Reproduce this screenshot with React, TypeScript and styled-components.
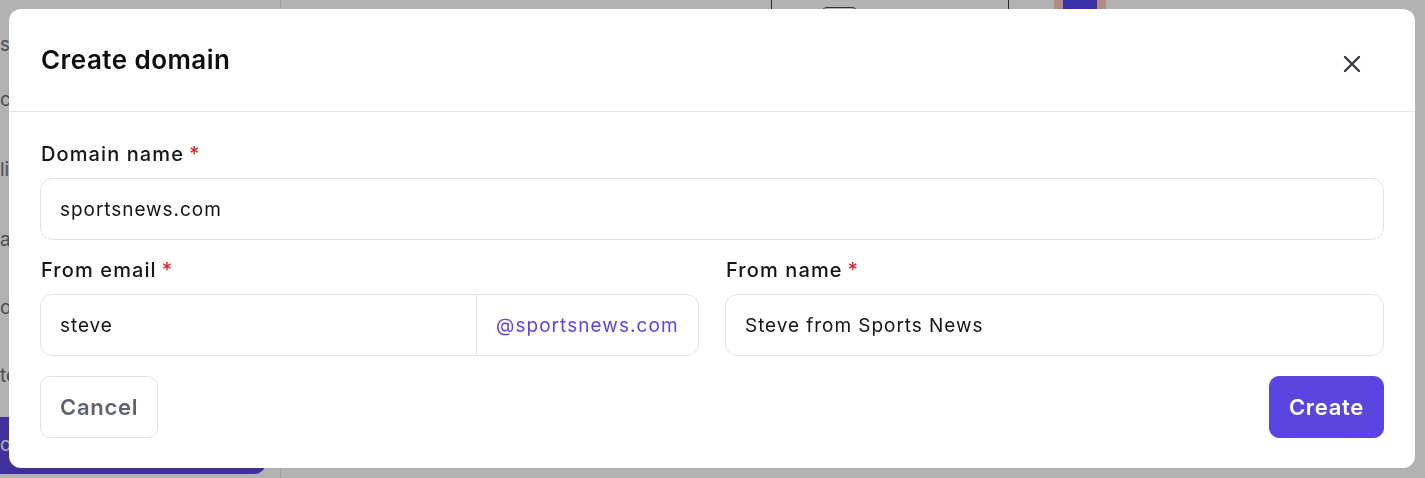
import * as React from "react";
import styled, { createGlobalStyle } from "styled-components";

const GlobalStyle = createGlobalStyle`
  * { box-sizing: border-box; }
  html, body { margin: 0; padding: 0; }
  body {
    font-family: Inter, "Noto Sans", "Liberation Sans", sans-serif;
    background: #ffffff;
    overflow: hidden;
  }
`;

const Page = styled.div`
  display: flex;
  width: 1425px;
  height: 478px;
  overflow: hidden;
`;

const Sidebar = styled.aside`
  width: 281px;
  flex-shrink: 0;
  border-right: 1px solid #e6e6e6;
  background: #ffffff;
`;

const SideInner = styled.div`
  margin-left: -12px;
  padding-top: 33px;
  display: flex;
  flex-direction: column;
`;

const NavItem = styled.div<{ $gap: number }>`
  padding-left: 12px;
  height: 24px;
  margin-bottom: ${(p) => p.$gap}px;
  font-size: 19px;
  color: #6b7280;
  line-height: 24px;
`;

const SideButton = styled.div`
  width: 278px;
  height: 57px;
  border-radius: 0 0 12px 0;
  background: #5b45e0;
  color: #ffffff;
  font-size: 19px;
  line-height: 55px;
  padding-left: 12px;
  margin-top: -1px;
`;

const Main = styled.main`
  flex: 1;
  display: flex;
  flex-direction: column;
`;

const TopStrip = styled.div`
  display: flex;
  height: 40px;
`;

const Cell = styled.div<{ $w: number; $border?: boolean }>`
  width: ${(p) => p.$w}px;
  flex-shrink: 0;
  border-right: ${(p) => (p.$border ? "1px solid #3a3a3a" : "none")};
  display: flex;
  padding-top: 7px;
`;

const Chip = styled.div`
  margin-left: 49px;
  width: 37px;
  height: 24px;
  border: 1.5px solid #444a56;
  border-radius: 6px;
`;

const Avatar = styled.div`
  margin-left: 45px;
  margin-top: -7px;
  width: 52px;
  height: 40px;
  background: #ffc4bf;
  display: flex;
  justify-content: center;
`;

const AvatarShirt = styled.div`
  width: 34px;
  height: 36px;
  background: #5345f0;
`;

const Overlay = styled.div`
  position: fixed;
  inset: 0;
  background: rgba(0, 0, 0, 0.3);
  display: flex;
  align-items: flex-start;
  padding: 9px 10px 0 9px;
`;

const Modal = styled.div`
  width: 100%;
  height: 459px;
  background: #ffffff;
  border-radius: 12px;
  display: flex;
  flex-direction: column;
  overflow: hidden;
`;

const Header = styled.div`
  height: 103px;
  flex-shrink: 0;
  border-bottom: 1px solid #e5e5e5;
  display: flex;
  align-items: center;
  justify-content: space-between;
  padding: 0 43px 0 32px;
`;

const Title = styled.h2`
  margin: 0 0 2px 0;
  font-size: 26px;
  font-weight: 600;
  color: #0d0d0d;
  letter-spacing: 0.45px;
`;

const CloseButton = styled.button`
  width: 40px;
  height: 40px;
  margin-top: 7px;
  border: none;
  background: transparent;
  padding: 0;
  display: flex;
  align-items: center;
  justify-content: center;
  cursor: pointer;
`;

const Body = styled.div`
  padding: 28px 31px 31px 31px;
  display: flex;
  flex-direction: column;
  gap: 16px;
`;

const Field = styled.div`
  display: flex;
  flex-direction: column;
  gap: 10px;
  min-width: 0;
`;

const Label = styled.label`
  font-size: 20px;
  line-height: 28px;
  letter-spacing: 1.1px;
  font-weight: 500;
  color: #161616;
  padding-left: 1px;
`;

const Required = styled.span`
  color: #dc2626;
  margin-left: 5px;
`;

const InputBox = styled.div`
  height: 62px;
  border: 1px solid #e3e3e3;
  border-radius: 12px;
  display: flex;
  align-items: stretch;
  overflow: hidden;
  background: #ffffff;
`;

const Input = styled.input`
  flex: 1;
  min-width: 0;
  border: none;
  outline: none;
  background: transparent;
  padding: 0 19px;
  font-family: inherit;
  font-size: 19px;
  letter-spacing: 0.95px;
  color: #141414;
`;

const Suffix = styled.div`
  width: 222px;
  flex-shrink: 0;
  border-left: 1px solid #e3e3e3;
  display: flex;
  align-items: center;
  padding-left: 19px;
  font-size: 19px;
  letter-spacing: 1.05px;
  color: #5b45e0;
`;

const Row = styled.div`
  display: grid;
  grid-template-columns: 1fr 1fr;
  gap: 26px;
`;

const Actions = styled.div`
  margin-top: 4px;
  display: flex;
  justify-content: space-between;
`;

const Button = styled.button<{ $primary?: boolean }>`
  height: 62px;
  padding: 0 19px;
  border-radius: 10px;
  font-family: inherit;
  font-size: 22px;
  font-weight: 600;
  letter-spacing: 0.7px;
  cursor: pointer;
  border: 1px solid ${(p) => (p.$primary ? "#5b45e0" : "#e3e3e3")};
  background: ${(p) => (p.$primary ? "#5b45e0" : "#ffffff")};
  color: ${(p) => (p.$primary ? "#ffffff" : "#5f6270")};
`;

const CloseIcon = () => (
  <svg width="18" height="18" viewBox="0 0 18 18" fill="none">
    <path
      d="M2 2L16 16M16 2L2 16"
      stroke="#363b46"
      strokeWidth="2.4"
      strokeLinecap="round"
    />
  </svg>
);

const navItems = [
  { label: "senders", gap: 31 },
  { label: "contacts", gap: 46 },
  { label: "lists", gap: 46 },
  { label: "automations", gap: 44 },
  { label: "overview", gap: 44 },
  { label: "templates", gap: 30 },
];

const App = () => {
  const [domain, setDomain] = React.useState("sportsnews.com");
  const [email, setEmail] = React.useState("steve");
  const [fromName, setFromName] = React.useState("Steve from Sports News");

  return (
    <>
      <GlobalStyle />
      <Page aria-hidden="true">
        <Sidebar>
          <SideInner>
            {navItems.map((item) => (
              <NavItem key={item.label} $gap={item.gap}>
                {item.label}
              </NavItem>
            ))}
            <SideButton>o</SideButton>
          </SideInner>
        </Sidebar>
        <Main>
          <TopStrip>
            <Cell $w={491} $border />
            <Cell $w={237} $border>
              <Chip />
            </Cell>
            <Cell $w={200}>
              <Avatar>
                <AvatarShirt />
              </Avatar>
            </Cell>
          </TopStrip>
        </Main>
      </Page>
      <Overlay>
        <Modal role="dialog" aria-labelledby="create-domain-title">
          <Header>
            <Title id="create-domain-title">Create domain</Title>
            <CloseButton aria-label="Close">
              <CloseIcon />
            </CloseButton>
          </Header>
          <Body>
            <Field>
              <Label>
                Domain name<Required>*</Required>
              </Label>
              <InputBox>
                <Input value={domain} onChange={(e) => setDomain(e.target.value)} />
              </InputBox>
            </Field>
            <Row>
              <Field>
                <Label>
                  From email<Required>*</Required>
                </Label>
                <InputBox>
                  <Input value={email} onChange={(e) => setEmail(e.target.value)} />
                  <Suffix>@{domain}</Suffix>
                </InputBox>
              </Field>
              <Field>
                <Label>
                  From name<Required>*</Required>
                </Label>
                <InputBox>
                  <Input
                    value={fromName}
                    onChange={(e) => setFromName(e.target.value)}
                  />
                </InputBox>
              </Field>
            </Row>
            <Actions>
              <Button>Cancel</Button>
              <Button $primary>Create</Button>
            </Actions>
          </Body>
        </Modal>
      </Overlay>
    </>
  );
};

export default App;
